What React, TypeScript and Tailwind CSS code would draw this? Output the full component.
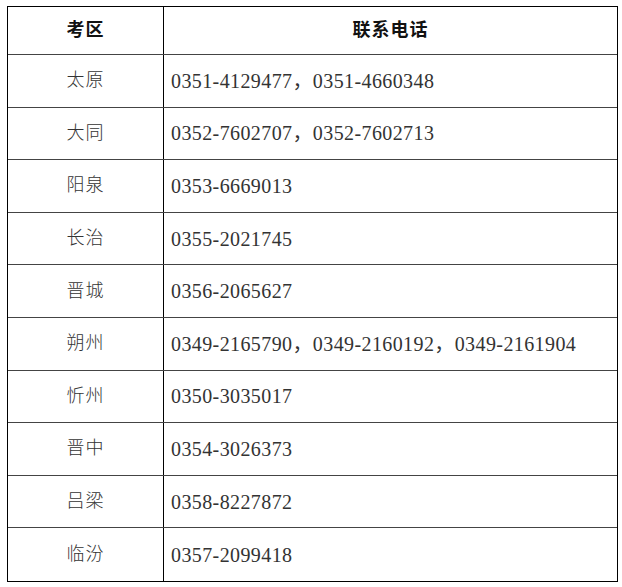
import React from 'react';

const rows: [string, string][] = [
  ['太原', '0351-4129477，0351-4660348'],
  ['大同', '0352-7602707，0352-7602713'],
  ['阳泉', '0353-6669013'],
  ['长治', '0355-2021745'],
  ['晋城', '0356-2065627'],
  ['朔州', '0349-2165790，0349-2160192，0349-2161904'],
  ['忻州', '0350-3035017'],
  ['晋中', '0354-3026373'],
  ['吕梁', '0358-8227872'],
  ['临汾', '0357-2099418'],
];

const font = "font-['Liberation_Serif','Noto_Sans_CJK_SC',serif]";

export default function App() {
  return (
    <div className="w-[622px] h-[587px] bg-white pl-[7px] pt-[6px]">
      <div className={`w-[611px] border border-black ${font}`}>
        {/* header */}
        <div className="flex h-[48px] border-b border-[#444]">
          <div className="w-[156px] border-r border-black flex items-center justify-center text-[18px] font-bold text-[#111] tracking-[1px]">
            考区
          </div>
          <div className="flex-1 flex items-center justify-center text-[18px] font-bold text-[#111] tracking-[1px]">
            联系电话
          </div>
        </div>

        {/* body rows */}
        {rows.map(([area, phone], i) => (
          <div
            key={area}
            className={`flex h-[52.6px] ${i < rows.length - 1 ? 'border-b border-[#444]' : ''}`}
          >
            <div className="w-[156px] border-r border-black flex items-center justify-center text-[18px] font-light text-[#333] tracking-[1px]">
              {area}
            </div>
            <div className="flex-1 flex items-center pl-[7px] text-[20px] text-[#333] tracking-[0.4px]">
              {phone}
            </div>
          </div>
        ))}
      </div>
    </div>
  );
}
